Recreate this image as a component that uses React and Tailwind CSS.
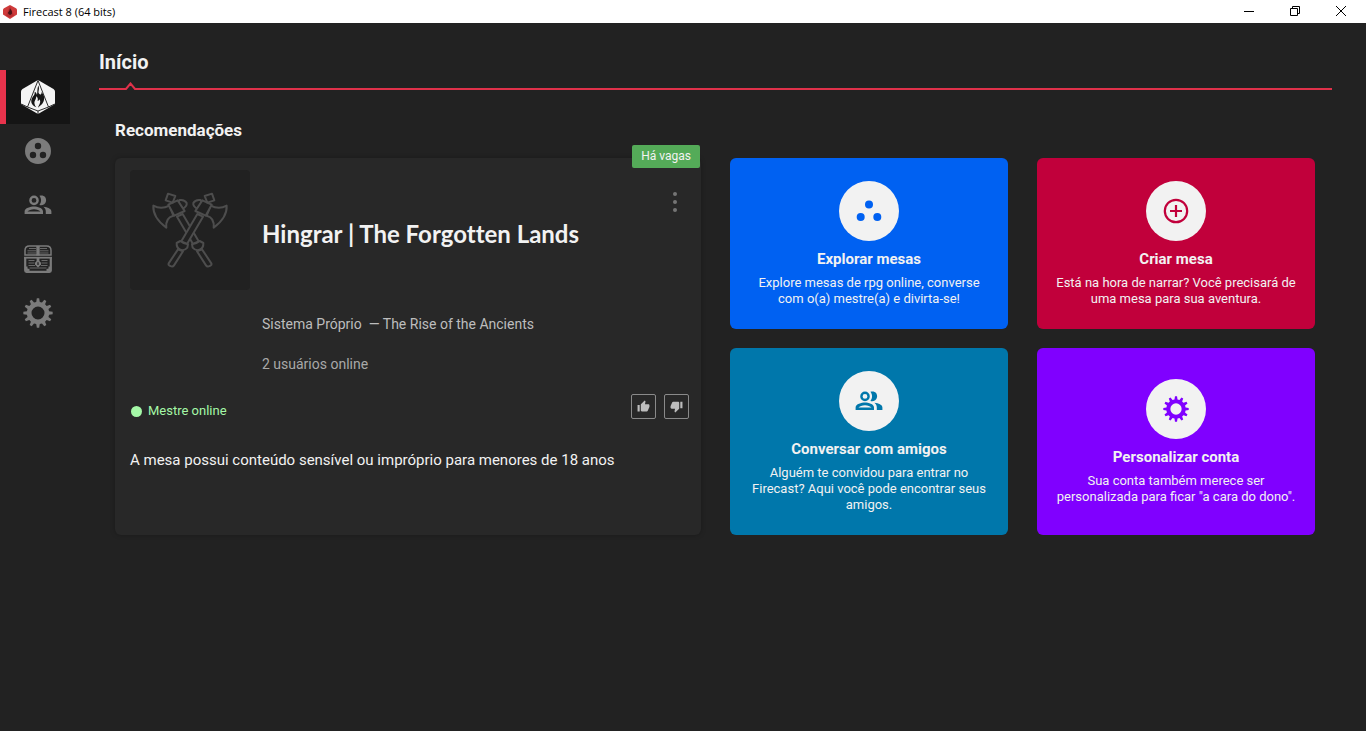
const gearPath = (() => {
  const teeth = 12;
  const points = [];
  for (let i = 0; i < teeth; i++) {
    const base = (i * 2 * Math.PI) / teeth - Math.PI / 2;
    [[-0.16, 11.2], [-0.08, 14.7], [0.08, 14.7], [0.16, 11.2]].forEach(([offset, r]) => {
      points.push(`${(15 + r * Math.cos(base + offset)).toFixed(2)} ${(15 + r * Math.sin(base + offset)).toFixed(2)}`);
    });
  }
  return `M${points.join('L')}Z M15 8.5a6.5 6.5 0 1 0 0 13a6.5 6.5 0 1 0 0-13Z`;
})();

function GearIcon({ className }) {
  return (
    <svg viewBox="0 0 30 30" className={className} fill="currentColor" fillRule="evenodd" aria-hidden="true">
      <path d={gearPath} />
    </svg>
  );
}

function FriendsIcon({ className }) {
  return (
    <svg viewBox="0 0 28 20" className={className} fill="currentColor" fillRule="evenodd" aria-hidden="true">
      <path d="M10 0.6a4.8 4.8 0 1 0 0 9.6a4.8 4.8 0 1 0 0-9.6ZM10 3a2.4 2.4 0 1 1 0 4.8a2.4 2.4 0 1 1 0-4.8Z" />
      <path d="M10 11.4C6.6 11.4 0.6 12.8 0.6 16.4V19H19v-2.600C19 12.800 13.400 11.400 10 11.400ZM3.400 16.600C4.500 15.300 7.200 14.300 10 14.300s5.400 1 6.500 2.300Z" />
      <path d="M15.400 0.800C20.500 -0.500 22.600 3 22 6.200C21.400 9.500 18.200 10.700 15.400 9.900C17.600 7.400 17.600 3.300 15.400 0.800Z" />
      <path d="M19.400 11.800C23.600 12.400 27.400 13.800 27.400 16.400V19H21.800v-2.600C21.800 14.500 20.900 13 19.400 11.800Z" />
    </svg>
  );
}

function TablesIcon({ className }) {
  return (
    <svg viewBox="0 0 26 26" className={className} fill="currentColor" fillRule="evenodd" aria-hidden="true">
      <path d="M13 0a13 13 0 1 0 0 26a13 13 0 1 0 0-26ZM13 4.800a3.200 3.200 0 1 1 0 6.400a3.200 3.200 0 1 1 0-6.400ZM8 13.800a3.200 3.200 0 1 1 0 6.400a3.200 3.200 0 1 1 0-6.400ZM18 13.800a3.200 3.200 0 1 1 0 6.400a3.200 3.200 0 1 1 0-6.400Z" />
    </svg>
  );
}

function ChestIcon({ className }) {
  return (
    <svg viewBox="0 0 28 28" className={className} fill="none" stroke="currentColor" aria-hidden="true">
      <path d="M1 10V5.500Q1 1 5.500 1H22.500Q27 1 27 5.500V10Z" strokeWidth="1.500" />
      <path d="M5 3.500H12M16 3.500H23M3.500 5.800H12M16 5.800H24.500M3.500 8H12M16 8H24.500" strokeWidth="0.800" />
      <path d="M14 1V10.500" strokeWidth="3.400" />
      <path d="M0 12.700H28" strokeWidth="1.800" />
      <path d="M1.200 12.500V25.500Q1.200 26.800 2.500 26.800H25.500Q26.800 26.800 26.800 25.500V12.500" strokeWidth="2.200" />
      <path d="M4.500 15.500H10.500M17.500 15.500H23.500M4.500 18H10.500M17.500 18H23.500M4.500 20.500H11M17 20.500H23.500M5.500 23H22.500" strokeWidth="0.800" />
      <path d="M12.600 12.500H15.400V16L17 17.700V19.700L14 22.500L11 19.700V17.700L12.600 16Z" fill="currentColor" stroke="none" />
      <path d="M14 17.300V20" stroke="#222222" strokeWidth="1.300" />
      <path d="M1 21.500H3.500V23.500L5.500 24V26.500H1ZM27 21.500H24.500V23.500L22.500 24V26.500H27Z" fill="currentColor" stroke="none" />
    </svg>
  );
}

function FirecastIcon({ className }) {
  return (
    <svg viewBox="0 0 34 34" className={className} aria-hidden="true">
      <path d="M17 0L32.500 9Q34 10 34 11.500V23Q34 24 32.500 25L17 34L1.500 25Q0 24 0 23V11.500Q0 10 1.500 9Z" fill="#f4f4f4" />
      <path d="M17 0.500L6.500 27L17 31L27.500 27ZM17 31V34M6.500 27L0.800 24.300M27.500 27L33.200 24.300" fill="none" stroke="#151515" strokeWidth="0.900" />
      <path transform="translate(-3.100 -3.400) scale(1.180)" d="M17.300 7.500C18.900 11 16.500 12.600 18 14.600C19.100 16 20.300 14.700 20 13C23 16.300 22.600 19.300 21.400 21.700C20.500 23.700 18.300 25 17 26.400C17.900 23.900 19.800 22 18.400 19.300C17.900 20.500 17.300 20.600 16.700 20.700C17.200 18.700 16.600 17.500 15.500 16.700C15.800 19.300 13.500 20.600 14.100 23C14.300 24.300 14.800 25 15.700 26C12.700 25 10.700 22.600 11.500 19.400C12.200 16.700 14.700 15.700 14.200 12.800C16 13.500 15.800 15 16.200 15.300C16.700 13 16.200 10.300 17.300 7.500Z" fill="#151515" />
    </svg>
  );
}

function Axe() {
  return (
    <>
      <path d="M262 192L214 274L231 282L279 200Z" />
      <path d="M204 298L176 340Q174 346 181 348Q188 352 192 346L219 304Z" />
      <path d="M200 279L211 273Q220 281 234 283L232 293Q222 304 211 299Q199 294 200 279Z" />
      <path d="M265 178Q248 170 250 159Q256 148 271 150L276 156Z" />
      <path d="M302 167Q327 180 350 167Q352 203 311 233Q314 203 290 197Z" />
      <path d="M277 151L305 164L287 197L256 183Z" />
      <path d="M284 138L306 131L313 151L292 158Z" />
    </>
  );
}

function AxesIcon({ className }) {
  return (
    <svg viewBox="60 60 360 360" className={className} fill="#212121" stroke="#4d4d4d" strokeWidth="6" strokeLinejoin="round" aria-hidden="true">
      <g transform="translate(480 0) scale(-1 1)"><Axe /></g>
      <Axe />
    </svg>
  );
}

function DotsIcon({ className }) {
  return (
    <svg viewBox="0 0 26 22" className={className} fill="currentColor" aria-hidden="true">
      <circle cx="13" cy="4.500" r="4" />
      <circle cx="4.700" cy="17" r="4" />
      <circle cx="21.300" cy="17" r="4" />
    </svg>
  );
}

function PlusIcon({ className }) {
  return (
    <svg viewBox="0 0 26 26" className={className} fill="none" stroke="currentColor" strokeWidth="2.200" aria-hidden="true">
      <circle cx="13" cy="13" r="11.200" />
      <path d="M13 7V19M7 13H19" />
    </svg>
  );
}

function ThumbIcon({ className }) {
  return (
    <svg viewBox="0 0 24 24" className={className} fill="currentColor" aria-hidden="true">
      <path d="M1 21h4V9H1v12zm22-11c0-1.100-.9-2-2-2h-6.310l.95-4.570.03-.32c0-.41-.17-.79-.44-1.060L14.170 1 7.590 7.590C7.220 7.950 7 8.450 7 9v10c0 1.100.9 2 2 2h9c.83 0 1.540-.5 1.840-1.220l3.020-7.050c.09-.23.14-.47.14-.73v-2z" />
    </svg>
  );
}

const navItems = [
  { label: 'Mesas', icon: <TablesIcon className="size-[26px]" /> },
  { label: 'Amigos', icon: <FriendsIcon className="h-5 w-7" /> },
  { label: 'Baú', icon: <ChestIcon className="size-7" /> },
  { label: 'Configurações', icon: <GearIcon className="size-[30px]" /> },
];

const actions = [
  {
    title: 'Explorar mesas',
    text: 'Explore mesas de rpg online, converse com o(a) mestre(a) e divirta-se!',
    color: 'bg-[#0061f2]',
    ink: 'text-[#0061f2]',
    icon: <DotsIcon className="h-[22px] w-[26px]" />,
  },
  {
    title: 'Criar mesa',
    text: 'Está na hora de narrar? Você precisará de uma mesa para sua aventura.',
    color: 'bg-[#c1003b]',
    ink: 'text-[#c1003b]',
    icon: <PlusIcon className="size-[26px]" />,
  },
  {
    title: 'Conversar com amigos',
    text: 'Alguém te convidou para entrar no Firecast? Aqui você pode encontrar seus amigos.',
    color: 'bg-[#0077ab]',
    ink: 'text-[#0077ab]',
    icon: <FriendsIcon className="h-5 w-7" />,
  },
  {
    title: 'Personalizar conta',
    text: 'Sua conta também merece ser personalizada para ficar "a cara do dono".',
    color: 'bg-[#8000ff]',
    ink: 'text-[#8000ff]',
    icon: <GearIcon className="size-[26px]" />,
  },
];

function TitleBar() {
  return (
    <header className="flex h-[23px] items-center bg-white pl-[3px] font-['Open_Sans',sans-serif] text-black">
      <svg viewBox="0 0 14 14" className="size-[14px]" aria-hidden="true">
        <path d="M7 0L13 3.300Q14 4 14 5V9.500L7 14L0 9.500V5Q0 4 1 3.300Z" fill="#cf3b3b" />
        <path d="M7 1L3 10.500L7 12.500L11 10.500Z" fill="#b92f32" />
        <path d="M7 3.500Q9.700 6 9 8.500Q8.300 9.800 7 10Q4.800 9.300 5 7.500Q6.500 6.500 7 3.500Z" fill="#4a1518" />
      </svg>
      <span className="pl-[6px] text-[11px] leading-[23px]">Firecast 8 (64 bits)</span>
      <div className="ml-auto flex pr-[2px] pb-[2px]">
        <button type="button" aria-label="Minimizar" className="flex h-[21px] w-[46px] items-center justify-center">
          <svg viewBox="0 0 10 10" className="size-[10px]" stroke="#000" aria-hidden="true"><path d="M0 5.500H10" /></svg>
        </button>
        <button type="button" aria-label="Restaurar" className="flex h-[21px] w-[46px] items-center justify-center">
          <svg viewBox="0 0 10 10" className="size-[10px]" stroke="#000" fill="none" aria-hidden="true"><path d="M0.500 2.500H7.500V9.500H0.500ZM2.500 2.500V0.500H9.500V7.500H7.500" /></svg>
        </button>
        <button type="button" aria-label="Fechar" className="flex h-[21px] w-[46px] items-center justify-center">
          <svg viewBox="0 0 10 10" className="size-[10px]" stroke="#000" aria-hidden="true"><path d="M0 0L10 10M10 0L0 10" /></svg>
        </button>
      </div>
    </header>
  );
}

export default function App() {
  return (
    <div className="flex min-h-screen flex-col bg-[#222222] font-[Roboto,sans-serif] text-[#f2f2f2]">
      <TitleBar />
      <div className="flex flex-1">
        <nav className="flex w-[70px] shrink-0 flex-col pt-[47px] text-[#7b7b7b]">
          <button type="button" aria-label="Início" aria-current="page" className="flex h-[54px] items-center justify-center border-l-6 border-[#e8334c] bg-[#151515]">
            <FirecastIcon className="size-[34px]" />
          </button>
          {navItems.map((item) => (
            <button key={item.label} type="button" aria-label={item.label} className="flex h-[54px] items-center justify-center pl-[6px]">
              {item.icon}
            </button>
          ))}
        </nav>

        <main className="min-w-0 flex-1 pr-[34px] pl-[29px]">
          <h1 className="pt-[25px] text-xl leading-7 font-bold">Início</h1>
          <div className="mt-[6px] flex items-end text-[#df314a]">
            <span className="w-[26px] border-b-2" />
            <svg viewBox="0 0 11 8" className="h-2 w-[11px]" fill="none" stroke="currentColor" strokeWidth="2" aria-hidden="true">
              <path d="M0 7H1L5.500 1.500L10 7H11" />
            </svg>
            <span className="flex-1 border-b-2" />
          </div>

          <section className="pt-7 pr-[17px] pl-4">
            <h2 className="text-[17px] leading-6 font-bold">Recomendações</h2>
            <div className="mt-4 grid grid-cols-[586fr_585fr] gap-[29px]">
              <article className="relative flex flex-col rounded-md bg-[#282828] px-[15px] pt-3 shadow-[0_0_5px_rgba(0,0,0,0.25)]">
                <span className="absolute -top-[13px] right-[1px] rounded-xs bg-[#54ab58] px-[9px] text-xs leading-[23px]">Há vagas</span>
                <div className="flex">
                  <div className="size-[120px] shrink-0 rounded-sm bg-[#212121]">
                    <AxesIcon className="size-full" />
                  </div>
                  <h3 className="flex-1 pt-12 pl-3 font-[Lato,sans-serif] text-2xl leading-8 font-bold [font-variant-ligatures:none]">Hingrar | The Forgotten Lands</h3>
                  <button type="button" aria-label="Mais opções" className="mt-5 flex h-6 w-[22px] flex-col items-center justify-center gap-1 self-start text-[#757575]">
                    <span className="size-1 rounded-full bg-current" />
                    <span className="size-1 rounded-full bg-current" />
                    <span className="size-1 rounded-full bg-current" />
                  </button>
                </div>
                <div className="pt-6 pl-[132px] text-sm leading-5 text-[#bdbdbd]">
                  <p>Sistema Próprio &nbsp;— The Rise of the Ancients</p>
                  <p className="mt-5 text-[#a8a8a8]">2 usuários online</p>
                </div>
                <div className="mt-5 flex items-start justify-between">
                  <p className="flex items-center pt-[7px] text-[13px] leading-5 text-[#a5f8a7]">
                    <span className="mr-[6px] ml-px size-[11px] rounded-full bg-current" />
                    Mestre online
                  </p>
                  <div className="-mr-[3px] flex gap-2">
                    <button type="button" aria-label="Gostei" className="flex size-[25px] items-center justify-center rounded-xs border border-[#8a8a8a] text-[#bdbdbd]">
                      <ThumbIcon className="size-[13px]" />
                    </button>
                    <button type="button" aria-label="Não gostei" className="flex size-[25px] items-center justify-center rounded-xs border border-[#8a8a8a] text-[#bdbdbd]">
                      <ThumbIcon className="size-[13px] rotate-180" />
                    </button>
                  </div>
                </div>
                <p className="mt-[29px] text-[15px] leading-5">A mesa possui conteúdo sensível ou impróprio para menores de 18 anos</p>
              </article>

              <div className="grid grid-cols-2 gap-x-[29px] gap-y-[19px]">
                {actions.map((action) => (
                  <button key={action.title} type="button" className={`flex flex-col items-center justify-center rounded-md px-4 pt-[23px] pb-[22px] text-center ${action.color}`}>
                    <span className={`flex size-[60px] items-center justify-center rounded-full bg-[#f2f2f2] ${action.ink}`}>{action.icon}</span>
                    <span className="mt-[7px] text-[15px] leading-[22px] font-bold">{action.title}</span>
                    <span className="mt-[5px] text-[13px] leading-4">{action.text}</span>
                  </button>
                ))}
              </div>
            </div>
          </section>
        </main>
      </div>
    </div>
  );
}
